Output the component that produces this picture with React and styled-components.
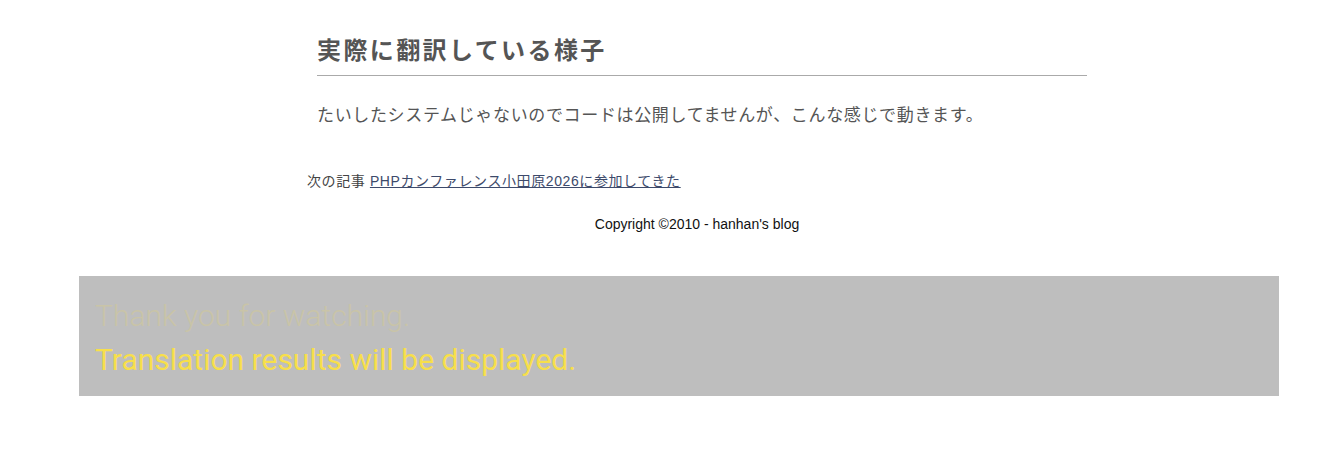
import React from "react";
import styled, { createGlobalStyle } from "styled-components";

const GlobalStyle = createGlobalStyle`
  body {
    margin: 0;
    background: #fff;
    font-family: "Liberation Sans", "Noto Sans CJK JP", sans-serif;
  }
`;

const Page = styled.div`
  width: 1327px;
  padding-top: 31px;
`;

const Container = styled.div`
  width: 780px;
  margin-left: 307px;
`;

const Article = styled.article`
  padding-left: 10px;
`;

const Heading = styled.h2`
  margin: 0;
  padding-bottom: 8px;
  border-bottom: 1px solid #aaa;
  font-family: "Noto Sans CJK JP", sans-serif;
  font-size: 24px;
  font-weight: 700;
  line-height: 36px;
  color: #555;
  letter-spacing: 2.4px;
`;

const Paragraph = styled.p`
  margin: 22px 0 0;
  font-family: "Noto Sans CJK JP", sans-serif;
  font-size: 17px;
  letter-spacing: 0.65px;
  line-height: 32px;
  color: #555;
`;

const NextNav = styled.div`
  margin-top: 40px;
  font-family: "Liberation Sans", "Noto Sans CJK JP", sans-serif;
  font-size: 14px;
  letter-spacing: 0.6px;
  line-height: 22px;
  color: #444;

  a {
    color: #3d4a6b;
    text-decoration: underline;
  }
`;

const Copyright = styled.footer`
  margin-top: 22px;
  text-align: center;
  font-family: "Liberation Sans", "Noto Sans CJK JP", sans-serif;
  font-size: 14px;
  line-height: 20px;
  color: #111;
`;

const Overlay = styled.div`
  margin: 42px 0 0 79px;
  width: 1200px;
  height: 120px;
  box-sizing: border-box;
  padding: 18px 16px 0;
  background: #bebebe;
  font-family: Roboto, "Noto Sans", sans-serif;
  font-size: 30px;
  line-height: 44px;
`;

const Line = styled.div`
  color: ${(p) => (p.$faded ? "#c9c4a8" : "#f7df4b")};
  font-weight: ${(p) => (p.$faded ? 300 : 400)};
`;

export default function App() {
  return (
    <>
      <GlobalStyle />
      <Page>
        <Container>
          <Article>
            <Heading>実際に翻訳している様子</Heading>
            <Paragraph>
              たいしたシステムじゃないのでコードは公開してませんが、こんな感じで動きます。
            </Paragraph>
          </Article>
          <NextNav>
            次の記事 <a href="#">PHPカンファレンス小田原2026に参加してきた</a>
          </NextNav>
          <Copyright>Copyright ©2010 - hanhan's blog</Copyright>
        </Container>
        <Overlay>
          <Line $faded>Thank you for watching.</Line>
          <Line>Translation results will be displayed.</Line>
        </Overlay>
      </Page>
    </>
  );
}
